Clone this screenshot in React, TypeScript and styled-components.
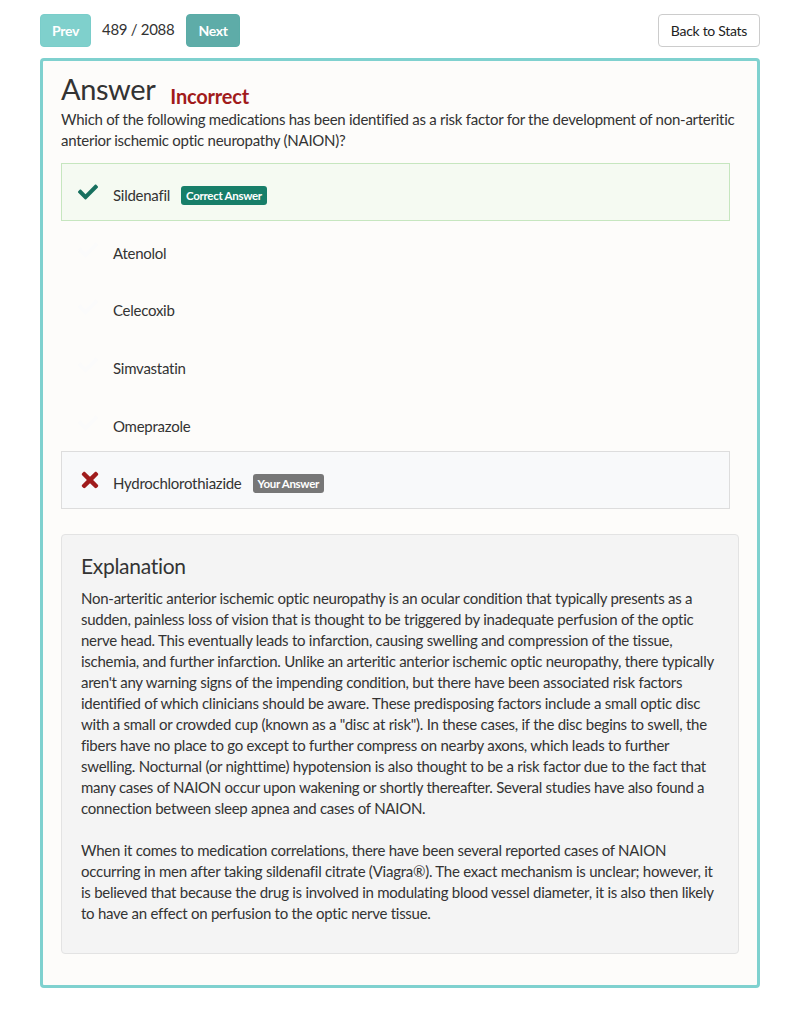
import styled, { createGlobalStyle } from 'styled-components';
import { FaCheck, FaTimes } from 'react-icons/fa';

const GlobalStyle = createGlobalStyle`
  html, body {
    margin: 0;
    padding: 0;
    background: #ffffff;
  }
  body {
    font-family: Lato, "Open Sans", sans-serif;
    color: #333333;
    font-size: 15px;
    line-height: 21px;
    letter-spacing: -0.26px;
  }
  * {
    box-sizing: border-box;
  }
`;

type Option = {
  key: string;
  label: string;
  status?: 'correct' | 'wrong';
};

const options: Option[] = [
  { key: 'a', label: 'Sildenafil', status: 'correct' },
  { key: 'b', label: 'Atenolol' },
  { key: 'c', label: 'Celecoxib' },
  { key: 'd', label: 'Simvastatin' },
  { key: 'e', label: 'Omeprazole' },
  { key: 'f', label: 'Hydrochlorothiazide', status: 'wrong' },
];

const explanation = [
  'Non-arteritic anterior ischemic optic neuropathy is an ocular condition that typically presents as a sudden, painless loss of vision that is thought to be triggered by inadequate perfusion of the optic nerve head. This eventually leads to infarction, causing swelling and compression of the tissue, ischemia, and further infarction. Unlike an arteritic anterior ischemic optic neuropathy, there typically aren\'t any warning signs of the impending condition, but there have been associated risk factors identified of which clinicians should be aware. These predisposing factors include a small optic disc with a small or crowded cup (known as a "disc at risk"). In these cases, if the disc begins to swell, the fibers have no place to go except to further compress on nearby axons, which leads to further swelling. Nocturnal (or nighttime) hypotension is also thought to be a risk factor due to the fact that many cases of NAION occur upon wakening or shortly thereafter. Several studies have also found a connection between sleep apnea and cases of NAION.',
  'When it comes to medication correlations, there have been several reported cases of NAION occurring in men after taking sildenafil citrate (Viagra®). The exact mechanism is unclear; however, it is believed that because the drug is involved in modulating blood vessel diameter, it is also then likely to have an effect on perfusion to the optic nerve tissue.',
];

const App = () => {
  return (
    <>
      <GlobalStyle />
      <Page>
        <TopBar>
          <Flex>
            <NavButton faded>Prev</NavButton>
            <Counter>489 / 2088</Counter>
            <NavButton>Next</NavButton>
          </Flex>
          <BackButton>Back to Stats</BackButton>
        </TopBar>

        <Card>
          <TitleRow>
            <Title>Answer</Title>
            <Verdict>Incorrect</Verdict>
          </TitleRow>
          <Question>
            Which of the following medications has been identified as a risk factor for the
            development of non-arteritic anterior ischemic optic neuropathy (NAION)?
          </Question>

          <OptionList>
            {options.map((opt) => (
              <OptionRow key={opt.key} status={opt.status}>
                <IconCell status={opt.status}>
                  {opt.status === 'wrong' ? <FaTimes size={24} /> : <FaCheck size={20} />}
                </IconCell>
                <OptionLabel>{opt.label}</OptionLabel>
                {opt.status === 'correct' && <Badge tone="#177e69">Correct Answer</Badge>}
                {opt.status === 'wrong' && <Badge tone="#777777">Your Answer</Badge>}
              </OptionRow>
            ))}
          </OptionList>

          <Explanation>
            <ExplanationTitle>Explanation</ExplanationTitle>
            {explanation.map((p, i) => (
              <Paragraph key={i}>{p}</Paragraph>
            ))}
          </Explanation>
        </Card>
      </Page>
    </>
  );
};

const Page = styled.div`
  width: 720px;
  margin: 0 auto;
  padding: 14px 0 24px;
`;

const TopBar = styled.div`
  display: flex;
  justify-content: space-between;
  align-items: center;
  margin-bottom: 11px;
`;

const Flex = styled.div`
  display: flex;
  align-items: center;
`;

const NavButton = styled.button<{ faded?: boolean }>`
  height: 33px;
  padding: 0 11px;
  border: 1px solid ${({ faded }) => (faded ? '#7acdca' : '#5aaca7')};
  border-radius: 4px;
  background: ${({ faded }) => (faded ? '#7fd0cc' : '#5eaca8')};
  color: #ffffff;
  font-family: Lato, sans-serif;
  font-weight: 700;
  font-size: 14px;
  letter-spacing: -0.3px;
`;

const Counter = styled.span`
  margin: 0 12px 0 11px;
  font-size: 15px;
  letter-spacing: -0.3px;
  padding-bottom: 3px;
`;

const BackButton = styled.button`
  height: 33px;
  padding: 0 12px;
  border: 1px solid #cccccc;
  border-radius: 4px;
  background: #ffffff;
  color: #222222;
  font-family: Lato, sans-serif;
  font-size: 14px;
  letter-spacing: -0.3px;
`;

const Card = styled.div`
  border: 3px solid #7fd1cf;
  border-radius: 4px;
  background: #fdfcfa;
  padding: 10px 18px 31px;
`;

const TitleRow = styled.div`
  display: flex;
  align-items: baseline;
`;

const Title = styled.h1`
  margin: 0;
  font-size: 29px;
  line-height: 36px;
  font-weight: 400;
  letter-spacing: -0.4px;
  color: #333333;
`;

const Verdict = styled.span`
  margin-left: 15px;
  font-size: 20px;
  font-weight: 700;
  letter-spacing: -0.2px;
  color: #a11b1b;
  position: relative;
  top: 4px;
`;

const Question = styled.p`
  margin: 2px 0 12px;
`;

const OptionList = styled.div`
  display: flex;
  flex-direction: column;
  margin-right: 9px;
  margin-bottom: 25px;
`;

const OptionRow = styled.div<{ status?: 'correct' | 'wrong' }>`
  display: flex;
  align-items: center;
  height: 57.6px;
  padding: 8px 16px 0;
  border: 1px solid
    ${({ status }) =>
      status === 'correct' ? '#c6e6bf' : status === 'wrong' ? '#dddddd' : 'transparent'};
  background: ${({ status }) =>
    status === 'correct' ? '#f5faf2' : status === 'wrong' ? '#f8f9fa' : 'transparent'};
`;

const IconCell = styled.span<{ status?: 'correct' | 'wrong' }>`
  width: 35px;
  display: flex;
  align-items: center;
  margin-top: -7px;
  color: ${({ status }) =>
    status === 'correct' ? '#17705f' : status === 'wrong' ? '#a01c1c' : '#fbfbfb'};
`;

const OptionLabel = styled.span`
  font-size: 15px;
`;

const Badge = styled.span<{ tone: string }>`
  margin-left: 11px;
  padding: 3px 5px;
  border-radius: 3px;
  background: ${({ tone }) => tone};
  color: #ffffff;
  font-size: 11.5px;
  line-height: 13px;
  font-weight: 700;
  letter-spacing: -0.3px;
`;

const Explanation = styled.div`
  background: #f4f4f4;
  border: 1px solid #e3e3e3;
  border-radius: 4px;
  padding: 17px 19px 19px;
`;

const ExplanationTitle = styled.h3`
  margin: 0 0 8px;
  font-size: 21px;
  line-height: 28px;
  font-weight: 400;
  letter-spacing: -0.3px;
  color: #333333;
`;

const Paragraph = styled.p`
  margin: 0 0 21px;
  &:last-child {
    margin-bottom: 10px;
  }
`;

export default App;
